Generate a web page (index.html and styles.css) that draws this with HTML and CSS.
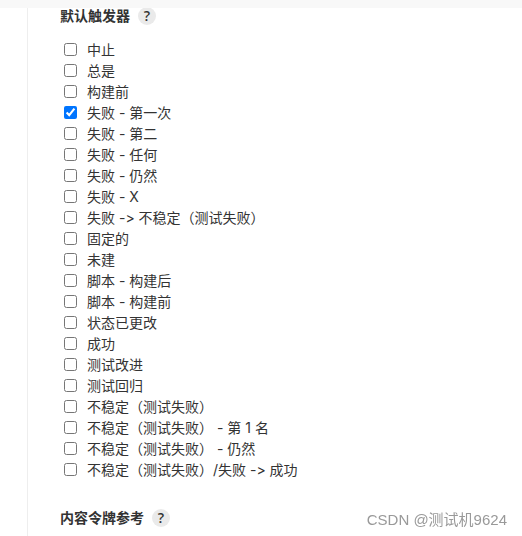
FILE: index.html
```
<!DOCTYPE html>
<html lang="zh-CN">
<head>
    <meta charset="UTF-8">
    <meta name="viewport" content="width=device-width, initial-scale=1.0">
    <title>默认触发器</title>
    <link rel="stylesheet" href="styles.css">
</head>
<body>
    <div class="top-bar"></div>
    <main class="content">
        <div class="setting-title">
            <h2>默认触发器</h2>
            <button type="button" class="help">?</button>
        </div>

        <div class="trigger-list">
            <label><input type="checkbox"><span>中止</span></label>
            <label><input type="checkbox"><span>总是</span></label>
            <label><input type="checkbox"><span>构建前</span></label>
            <label><input type="checkbox" checked><span>失败 - 第一次</span></label>
            <label><input type="checkbox"><span>失败 - 第二</span></label>
            <label><input type="checkbox"><span>失败 - 任何</span></label>
            <label><input type="checkbox"><span>失败 - 仍然</span></label>
            <label><input type="checkbox"><span>失败 - X</span></label>
            <label><input type="checkbox"><span>失败 -&gt; 不稳定（测试失败）</span></label>
            <label><input type="checkbox"><span>固定的</span></label>
            <label><input type="checkbox"><span>未建</span></label>
            <label><input type="checkbox"><span>脚本 - 构建后</span></label>
            <label><input type="checkbox"><span>脚本 - 构建前</span></label>
            <label><input type="checkbox"><span>状态已更改</span></label>
            <label><input type="checkbox"><span>成功</span></label>
            <label><input type="checkbox"><span>测试改进</span></label>
            <label><input type="checkbox"><span>测试回归</span></label>
            <label><input type="checkbox"><span>不稳定（测试失败）</span></label>
            <label><input type="checkbox"><span>不稳定（测试失败） - 第 1 名</span></label>
            <label><input type="checkbox"><span>不稳定（测试失败） - 仍然</span></label>
            <label><input type="checkbox"><span>不稳定（测试失败）/失败 -&gt; 成功</span></label>
        </div>

        <div class="setting-title">
            <h2>内容令牌参考</h2>
            <button type="button" class="help">?</button>
        </div>
    </main>
    <div class="watermark">CSDN @测试机9624</div>
</body>
</html>
```

FILE: styles.css
```
* {
    box-sizing: border-box;
}
body {
    margin: 0;
    min-height: 100vh;
    display: flex;
    flex-direction: column;
    background-color: #fff;
    color: #333;
    font-family: Inter, "Noto Sans CJK SC", sans-serif;
    font-size: 14px;
    font-variant-ligatures: none; /* keep -> as two characters */
}
.top-bar {
    height: 8px;
    background-color: #f8f8f8;
    position: relative;
    z-index: 1;
}
.content {
    flex: 1;
    margin-left: 27px;
    padding-left: 32px;
    border-left: 1px solid #eee;
}
.setting-title {
    display: flex;
    align-items: center;
    gap: 8px;
    height: 16px;
}
.setting-title h2 {
    margin: 0;
    font-size: 14px;
    line-height: 16px;
    font-weight: bold;
}
.help {
    width: 18px;
    height: 18px;
    padding: 0;
    border: none;
    border-radius: 50%;
    background-color: #eaeaea;
    color: #333;
    font-family: "Open Sans", sans-serif;
    font-size: 14px;
    font-weight: 600;
    line-height: 18px;
    text-align: center;
    cursor: pointer;
}
.trigger-list {
    margin: 15px 0 30px 4px;
}
.trigger-list label {
    display: flex;
    align-items: center;
    gap: 10px;
    height: 21px;
    line-height: 20px;
}
.trigger-list input {
    width: 13px;
    height: 13px;
    margin: 0;
    accent-color: #0075ff;
}
.watermark {
    position: fixed;
    right: 15px;
    bottom: 6px;
    color: #999;
    font-family: "Liberation Sans", "Noto Sans CJK SC", sans-serif;
    font-size: 15px;
    line-height: 20px;
}
```
